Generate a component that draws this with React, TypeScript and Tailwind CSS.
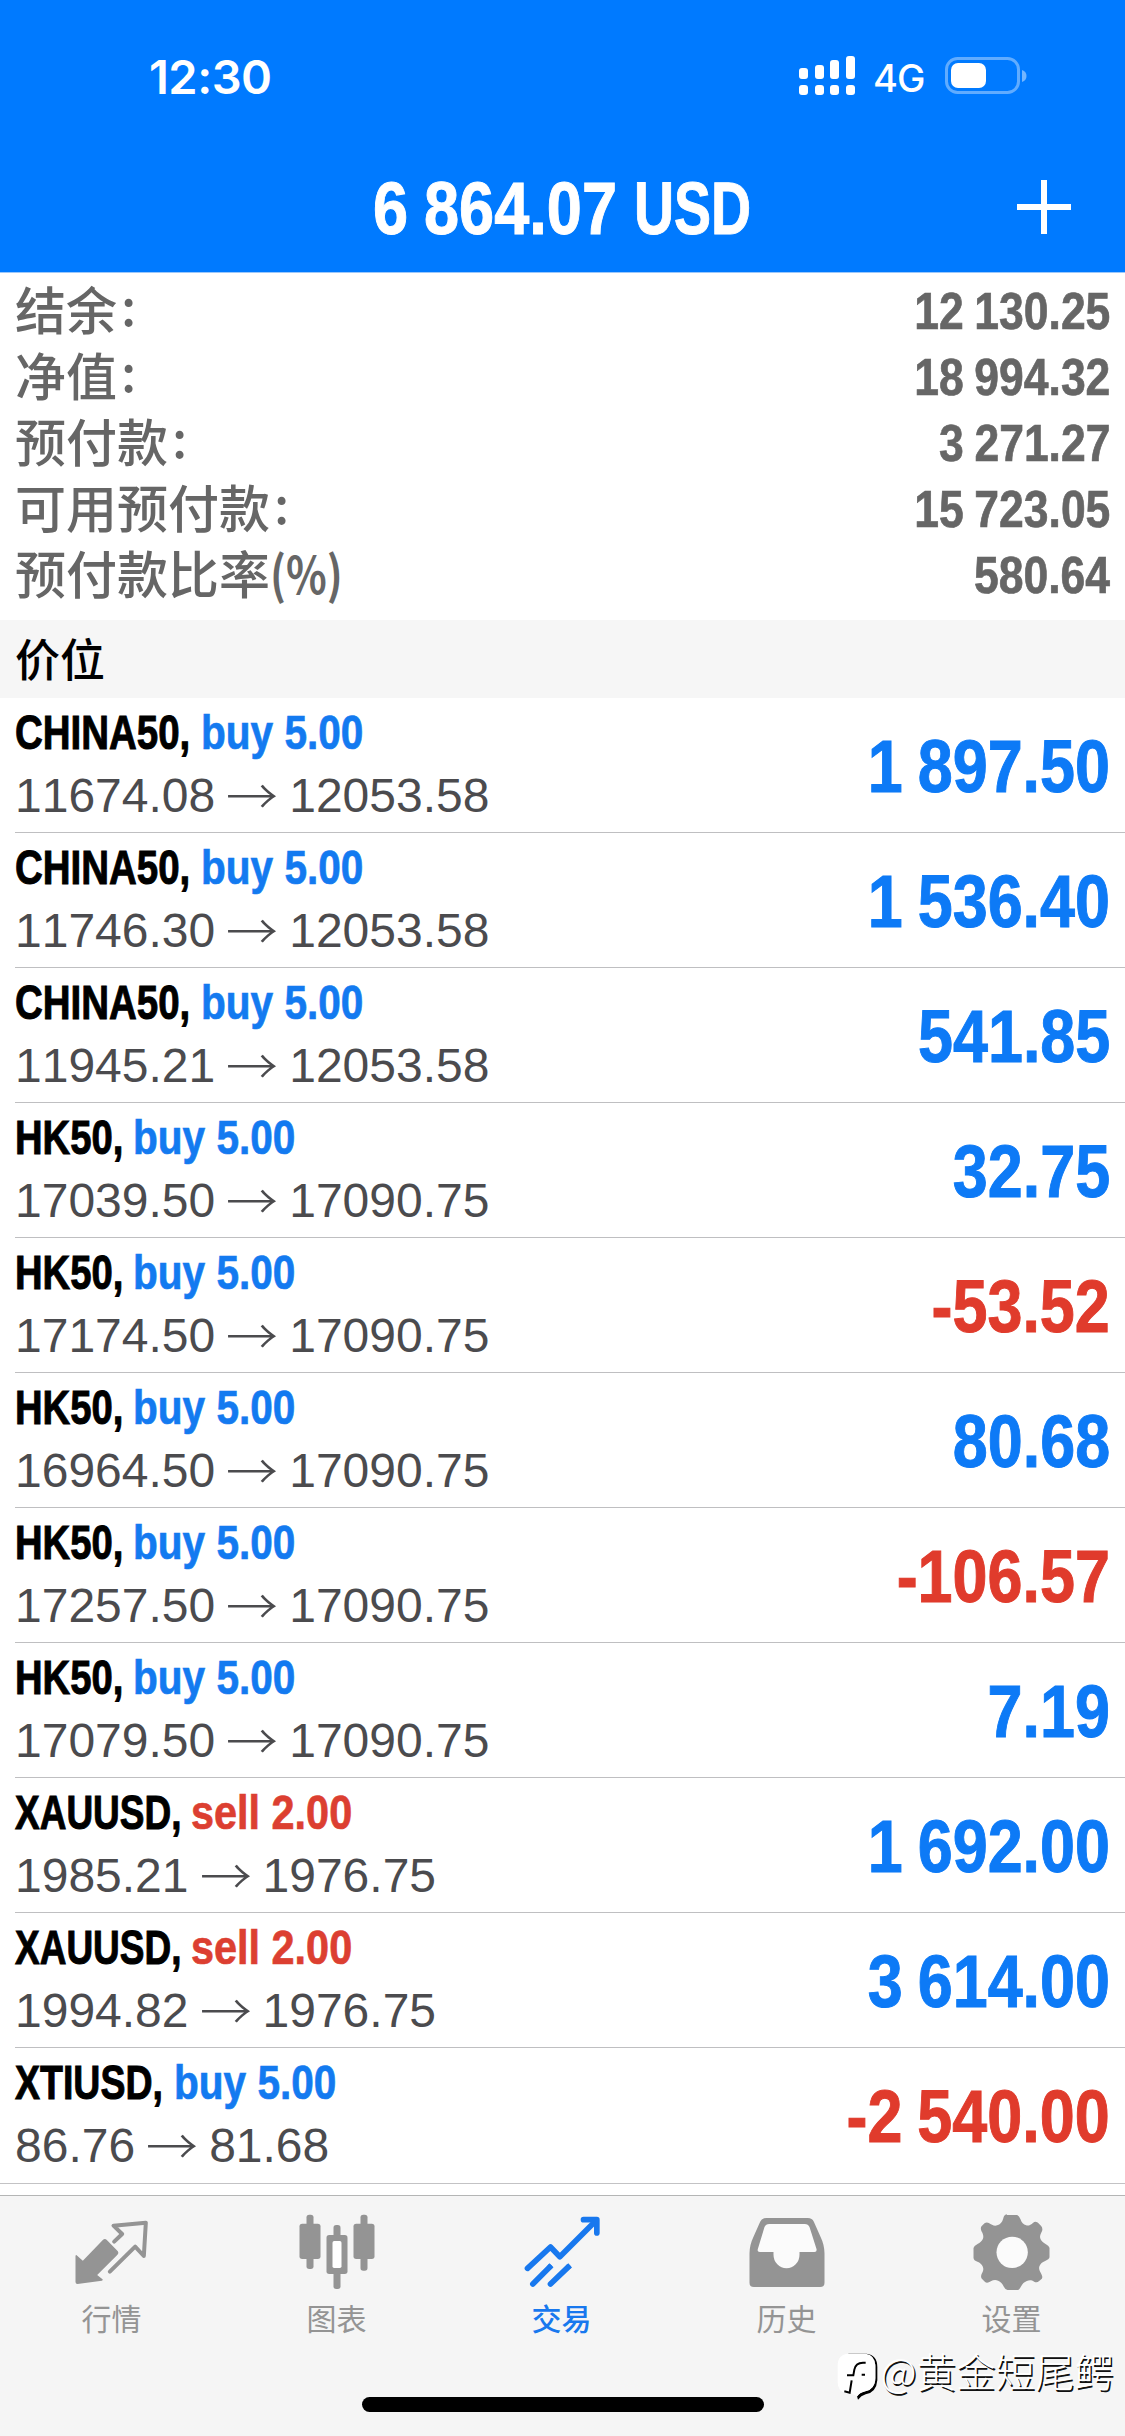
import type { ReactNode } from "react";

type Position = {
  symbol: string;
  symbolWidth: string;
  symbolScale: string;
  side: "buy" | "sell";
  volume: string;
  open: string;
  current: string;
  profit: string;
};

const CHINA = { symbol: "CHINA50,", symbolWidth: "w-[186px]", symbolScale: "scale-x-[0.785]" };
const HK = { symbol: "HK50,", symbolWidth: "w-[118px]", symbolScale: "scale-x-[0.78]" };
const XAU = { symbol: "XAUUSD,", symbolWidth: "w-[176px]", symbolScale: "scale-x-[0.755]" };
const XTI = { symbol: "XTIUSD,", symbolWidth: "w-[159px]", symbolScale: "scale-x-[0.765]" };

const positions: Position[] = [
  { ...CHINA, side: "buy", volume: "5.00", open: "11674.08", current: "12053.58", profit: "1 897.50" },
  { ...CHINA, side: "buy", volume: "5.00", open: "11746.30", current: "12053.58", profit: "1 536.40" },
  { ...CHINA, side: "buy", volume: "5.00", open: "11945.21", current: "12053.58", profit: "541.85" },
  { ...HK, side: "buy", volume: "5.00", open: "17039.50", current: "17090.75", profit: "32.75" },
  { ...HK, side: "buy", volume: "5.00", open: "17174.50", current: "17090.75", profit: "-53.52" },
  { ...HK, side: "buy", volume: "5.00", open: "16964.50", current: "17090.75", profit: "80.68" },
  { ...HK, side: "buy", volume: "5.00", open: "17257.50", current: "17090.75", profit: "-106.57" },
  { ...HK, side: "buy", volume: "5.00", open: "17079.50", current: "17090.75", profit: "7.19" },
  { ...XAU, side: "sell", volume: "2.00", open: "1985.21", current: "1976.75", profit: "1 692.00" },
  { ...XAU, side: "sell", volume: "2.00", open: "1994.82", current: "1976.75", profit: "3 614.00" },
  { ...XTI, side: "buy", volume: "5.00", open: "86.76", current: "81.68", profit: "-2 540.00" },
];

const summary = [
  { label: "结余", mark: ":", value: "12 130.25" },
  { label: "净值", mark: ":", value: "18 994.32" },
  { label: "预付款", mark: ":", value: "3 271.27" },
  { label: "可用预付款", mark: ":", value: "15 723.05" },
  { label: "预付款比率", mark: "(%)", value: "580.64" },
];

function StatusBar() {
  return (
    <div className="flex h-[136px] items-start justify-between pt-[47px] pr-[97px] pl-[149px] text-white">
      <span className="font-['Inter',sans-serif] text-[47px] leading-[60px] font-semibold tracking-[-0.5px]">12:30</span>
      <div className="flex h-[60px] items-center">
        <svg className="mt-[-3px] h-[40px] w-[57px]" viewBox="0 0 57 40" fill="currentColor">
          <rect x="0" y="12" width="9" height="11" rx="3" />
          <rect x="16" y="9" width="9" height="14" rx="3" />
          <rect x="31" y="4" width="9" height="19" rx="3" />
          <rect x="47" y="0" width="9" height="23" rx="3" />
          <rect x="0" y="29" width="9" height="10" rx="3" />
          <rect x="16" y="29" width="9" height="10" rx="3" />
          <rect x="31" y="29" width="9" height="10" rx="3" />
          <rect x="47" y="29" width="9" height="10" rx="3" />
        </svg>
        <span className="ml-[17px] w-[72px] pt-[2px] font-['Inter',sans-serif] text-[38px] leading-[60px] font-medium tracking-[-1px]">4G</span>
        <svg className="mt-[-3px] h-[38px] w-[83px]" viewBox="0 0 83 38">
          <rect x="1.5" y="1.5" width="72" height="34" rx="11" fill="none" stroke="#ffffff" strokeOpacity="0.38" strokeWidth="3" />
          <rect x="6" y="6" width="35" height="25" rx="7" fill="#ffffff" />
          <path d="M77 13c3 1 4.5 3.200 4.500 6s-1.500 5-4.500 6z" fill="#ffffff" fillOpacity="0.45" />
        </svg>
      </div>
    </div>
  );
}

function Header() {
  return (
    <header className="h-[273px] shrink-0 border-b border-[#9cc8fb] bg-[#007aff]">
      <StatusBar />
      <div className="grid h-[136px] grid-cols-[1fr_380px_1fr] items-center text-white">
        <span />
        <h1 className="flex pt-[3px] text-[74px] leading-[140px] font-bold [-webkit-text-stroke:1px_#ffffff]">
          <span className="w-[261px]">
            <span className="inline-block origin-left scale-x-[0.853] [word-spacing:-2px]">6 864.07</span>
          </span>
          <span className="origin-left scale-x-[0.75]">USD</span>
        </h1>
        <svg className="mt-[-2px] mr-[54px] h-[54px] w-[54px] justify-self-end" viewBox="0 0 54 54" stroke="currentColor" strokeWidth="6">
          <path d="M27 0v54M0 27h54" />
        </svg>
      </div>
    </header>
  );
}

function Summary() {
  return (
    <section className="flex h-[347px] shrink-0 flex-col pt-[4px] pr-[15px] pl-[15px] text-[#666666]">
      {summary.map((row) => (
        <div key={row.label} className="flex h-[66px] items-start justify-between">
          <span className="mt-[-2px] flex font-['Noto_Sans_CJK_SC',sans-serif] text-[51px] leading-[66px] font-medium">
            {row.label}
            {row.mark === ":" ? (
              <span className="mt-[-4px] ml-[4px]">{row.mark}</span>
            ) : (
              <span className="origin-left scale-x-[0.83] font-bold">{row.mark}</span>
            )}
          </span>
          <span className="mt-[1px] origin-right scale-x-[0.855] text-[52px] leading-[66px] font-bold [word-spacing:-2px] [-webkit-text-stroke:0.7px_#666666]">
            {row.value}
          </span>
        </div>
      ))}
    </section>
  );
}

function PositionRow({ item, last }: { item: Position; last: boolean }) {
  return (
    <li className={last ? "h-[136px] border-b border-[#c3c3c5]" : "h-[135px]"}>
      <div className={last ? "flex h-full pr-[15px] pl-[15px]" : "ml-[15px] flex h-full border-b border-[#bfbfc1] pr-[15px]"}>
        <div className="flex flex-1 flex-col pt-[3px]">
          <div className="flex h-[62px] text-[49px] leading-[62px] font-bold">
            <span className={item.symbolWidth}>
              <span className={`inline-block origin-left text-black [-webkit-text-stroke:1px_#000000] ${item.symbolScale}`}>
                {item.symbol}
              </span>
            </span>
            <span
              className={
                item.side === "buy"
                  ? "origin-left scale-x-[0.828] text-[#137af0] [-webkit-text-stroke:0.7px_#137af0]"
                  : "origin-left scale-x-[0.845] text-[#dc3f31] [-webkit-text-stroke:0.7px_#dc3f31]"
              }
            >
              {item.side} {item.volume}
            </span>
          </div>
          <div className="mt-[2px] flex h-[62px] text-[48px] leading-[62px] text-[#4b4b4e]">
            <span>{item.open}</span>
            <span className="mx-[13px] mt-[-3px] scale-x-[1.08] font-['Noto_Sans_CJK_SC',sans-serif] font-light">→</span>
            <span>{item.current}</span>
          </div>
        </div>
        <span
          className={
            item.profit.startsWith("-")
              ? "mt-[1px] origin-right scale-x-[0.85] text-[74px] leading-[136px] font-bold text-[#e03b2c] [word-spacing:-3px] [-webkit-text-stroke:1px_#e03b2c]"
              : "mt-[1px] origin-right scale-x-[0.85] text-[74px] leading-[136px] font-bold text-[#0d7af6] [word-spacing:-3px] [-webkit-text-stroke:1px_#0d7af6]"
          }
        >
          {item.profit}
        </span>
      </div>
    </li>
  );
}

function QuotesIcon() {
  return (
    <svg className="h-[80px] w-[80px]" viewBox="217.5 96 240 240" fill="currentColor">
      <path d="M225 228q1-5 5-1l17 15 60-62q6-6 12 0l33 34q4 5-1 10l-61 61 16 13q3 3-2 4l-73 10q-6 0-6-6z" />
      <path
        d="M341 185L365 162L339 137L436 128L430 228L404 200L328 275"
        fill="none"
        stroke="currentColor"
        strokeWidth="12"
        strokeLinejoin="round"
        strokeLinecap="round"
      />
    </svg>
  );
}

function ChartIcon() {
  return (
    <svg className="h-[80px] w-[80px]" viewBox="892.5 96 240 240" fill="currentColor">
      <rect x="918" y="104" width="21" height="163" rx="8" />
      <rect x="897" y="131" width="63" height="106" rx="8" />
      <rect x="1080" y="104" width="21" height="168" rx="8" />
      <rect x="1059" y="131" width="63" height="106" rx="8" />
      <rect x="999" y="135" width="21" height="50" rx="8" />
      <rect x="999" y="260" width="21" height="67" rx="8" />
      <rect x="978" y="165" width="63" height="117" rx="8" />
      <rect x="996" y="183" width="27" height="81" rx="5" fill="#ffffff" />
    </svg>
  );
}

function TradeIcon() {
  return (
    <svg className="h-[80px] w-[80px]" viewBox="127.5 96 240 240" fill="none" stroke="currentColor" strokeWidth="17" strokeLinejoin="round" strokeLinecap="round">
      <path d="M141 265L210 201L238 230L346 122" />
      <path d="M309 119H349V159" />
      <path d="M157 312L207 262M210 312L262 262" />
      <path d="M207 262L213 256M262 262L269 256" strokeLinecap="butt" />
    </svg>
  );
}

function HistoryIcon() {
  return (
    <svg className="h-[80px] w-[80px]" viewBox="802.5 96 240 240" fill="currentColor">
      <path d="M858 114H982q13 0 18 11l20 45q12 25 12 50v88q0 13-13 13H820q-13 0-13-13v-88q0-25 12-50l20-45q6-11 19-11z" />
      <path
        fill="#fbfbfb"
        d="M866 132H973q10 0 14 9l21 66q2 9-6 9H957v8a38 40 0 0 1-78 0v-8H838q-9 0-6-9l20-66q4-9 14-9z"
      />
    </svg>
  );
}

function SettingsIcon() {
  return (
    <svg className="h-[80px] w-[80px]" viewBox="517.5 96 240 240" fill="currentColor">
      <path d="M620 105h30q6 2 10 13c3 10 9 16 17 18s14-2 21-8 13-1 16 2l8 8q5 6 3 14c-6 12-8 18-5 25s8 10 14 14 13 8 13 13v28q-1 6-13 11c-9 4-14 8-17 15s0 14 4 21 6 13 3 17l-9 8q-6 5-14 1c-8-5-14-5-22-2s-13 8-18 17-6 10-12 10h-28q-6 0-11-10c-5-10-9-15-17-18s-15-2-22 2-13 6-18 1l-9-9q-4-4-1-13c5-9 7-15 4-23s-9-12-16-15-12-6-12-12v-29q1-6 12-12c8-4 13-8 16-15s1-15-4-23q-4-9 0-15l9-9q6-4 13-1c8 5 16 10 25 7s15-9 18-20q3-12 10-13z" />
      <circle cx="635" cy="217" r="47" fill="#fbfbfb" />
    </svg>
  );
}

function Tab({ icon, label, active = false }: { icon: ReactNode; label: string; active?: boolean }) {
  return (
    <div
      className={
        active
          ? "flex flex-col items-center pt-[16px] text-[#1878ee]"
          : "flex flex-col items-center pt-[16px] text-[#949494]"
      }
    >
      {icon}
      <span
        className={
          active
            ? "mt-[5px] mr-[2px] font-['Noto_Sans_CJK_SC',sans-serif] text-[30px] leading-[40px] font-medium"
            : "mt-[5px] mr-[2px] font-['Noto_Sans_CJK_SC',sans-serif] text-[30px] leading-[40px]"
        }
      >
        {label}
      </span>
    </div>
  );
}

function Watermark() {
  return (
    <div className="absolute right-[11px] bottom-[35px] flex h-[48px] items-center">
      <svg className="mr-[3px] h-[48px] w-[41px]" viewBox="12 36 123 144">
        <path d="M45 38H100Q133 42 133 78V118Q130 155 98 160Q84 164 75 176L72 166Q80 154 98 150Q124 145 127 118V70Z" fill="#000000" />
        <path d="M46 38H98Q127 42 127 74V112Q125 146 98 151Q78 156 73 166L53 157H40Q14 152 14 124V74Q14 40 46 38Z" fill="#ffffff" />
        <path d="M98 65H92Q68 64 64 86L61 103H42M56 118L50 155L34 151M86 101H96" fill="none" stroke="#000000" strokeWidth="6" />
      </svg>
      <span className="mt-[-15px] font-['Noto_Sans_CJK_SC',sans-serif] text-[39.500px] leading-[48px] font-light text-white [text-shadow:1.500px_1.500px_0.500px_#111111]">
        @黄金短尾鳄
      </span>
    </div>
  );
}

function TabBar() {
  return (
    <nav className="relative mt-[11px] flex h-[241px] shrink-0 flex-col border-t border-[#b4b5b5] bg-[#f5f5f5]">
      <div className="grid grid-cols-5">
        <Tab icon={<QuotesIcon />} label="行情" />
        <Tab icon={<ChartIcon />} label="图表" />
        <Tab icon={<TradeIcon />} label="交易" active />
        <Tab icon={<HistoryIcon />} label="历史" />
        <Tab icon={<SettingsIcon />} label="设置" />
      </div>
      <div className="mt-auto mb-[24px] h-[15px] w-[402px] self-center rounded-full bg-black" />
      <Watermark />
    </nav>
  );
}

export default function App() {
  return (
    <div className="flex h-[2436px] w-[1125px] flex-col overflow-hidden bg-white font-['Liberation_Sans',Arial,sans-serif] whitespace-nowrap [font-kerning:none]">
      <Header />
      <Summary />
      <h2 className="flex h-[78px] shrink-0 items-center bg-[#f6f6f6] pb-[2px] pl-[15px] font-['Noto_Sans_CJK_SC',sans-serif] text-[45px] leading-[76px] font-medium text-black">
        价位
      </h2>
      <ul className="shrink-0">
        {positions.map((item, index) => (
          <PositionRow key={item.open} item={item} last={index === positions.length - 1} />
        ))}
      </ul>
      <TabBar />
    </div>
  );
}
